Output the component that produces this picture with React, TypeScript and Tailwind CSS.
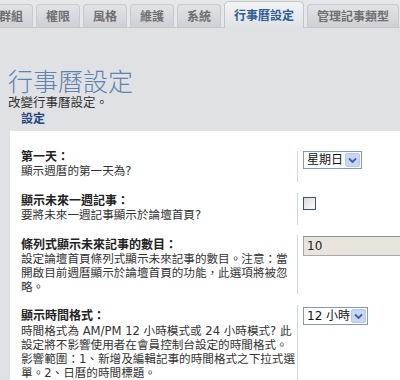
import React from 'react';

const tabs = ['群組', '權限', '風格', '維護', '系統', '行事曆設定', '管理記事類型'];
const activeTab = '行事曆設定';

function Chevron() {
  return (
    <svg width="9" height="7" viewBox="0 0 9 7">
      <path d="M1 1.5 L4.5 5 L8 1.5" fill="none" stroke="#4a5f8c" strokeWidth="1.8" />
    </svg>
  );
}

function FakeSelect({ value, width }: { value: string; width: string }) {
  return (
    <div className={`${width} h-[18px] flex items-center justify-between border border-[#7f9db9] bg-white pl-[3px] pr-[1px]`}>
      <span className="whitespace-nowrap text-[12px] leading-[16px] text-[#111]">{value}</span>
      <span className="shrink-0 w-[15px] h-[14px] flex items-center justify-center rounded-[2px] border border-[#b7c9f2] bg-[#c6d5fc]">
        <Chevron />
      </span>
    </div>
  );
}

export default function App() {
  const font = "font-['DejaVu_Sans','Noto_Sans_CJK_TC',sans-serif]";

  return (
    <div className={`w-[400px] h-[380px] overflow-hidden bg-[#dfe1e5] ${font}`}>
      {/* Tabs */}
      <div className="flex items-end gap-[3px] h-[28px] border-b border-[#c5c7cb] bg-[#e6e7ea]">
        {tabs.map((t, i) => {
          const active = t === activeTab;
          return (
            <div
              key={t}
              className={
                active
                  ? 'shrink-0 h-[27px] -mb-px flex items-center px-[9px] rounded-t-[5px] border border-b-0 border-[#c3c5c9] bg-gradient-to-b from-[#f3f4f6] to-[#dfe1e5] text-[12px] font-bold text-[#2d5d95] font-[\'Noto_Sans_CJK_TC\',sans-serif]'
                  : `shrink-0 h-[23px] flex items-center px-[9px] rounded-t-[4px] border border-b-0 border-[#c7c9cc] bg-gradient-to-b from-[#e2e3e6] to-[#cfd0d4] text-[12px] font-bold text-[#6e6f72] font-['Noto_Sans_CJK_TC',sans-serif] ${i === 0 ? '-ml-[11px]' : ''}`
              }
            >
              {t}
            </div>
          );
        })}
      </div>

      {/* Page header */}
      <div className="pl-[8px] pt-[38px]">
        <h1 className="text-[25px] leading-[28px] font-light text-[#6283ad] font-['Noto_Sans_CJK_TC',sans-serif]">行事曆設定</h1>
        <p className="mt-[2px] text-[12.5px] leading-[14px] text-[#333]">改變行事曆設定。</p>
        <h2 className="mt-[2px] pl-[13px] text-[12px] leading-[14px] font-bold text-[#23467b]">設定</h2>
      </div>

      {/* Settings panel */}
      <div className="mt-[5px] ml-[10px] bg-white pt-[20px] pb-4 text-[#333]">
        {/* 第一天 */}
        <div className="flex">
          <div className="w-[287px] shrink-0 pl-[11px] pb-[4px]">
            <div className="text-[12px] leading-[13px] font-bold text-[#222]">第一天：</div>
            <div className="text-[11.6px] leading-[14px]">顯示週曆的第一天為?</div>
          </div>
          <div className="flex-1 border-l border-[#d6d6d6] pl-[5px] pt-0">
            <FakeSelect value="星期日" width="w-[59px]" />
          </div>
        </div>

        {/* 未來一週記事 */}
        <div className="flex mt-[11px]">
          <div className="w-[287px] shrink-0 pl-[11px] pt-[2px] pb-[3px]">
            <div className="text-[12px] leading-[13px] font-bold text-[#222]">顯示未來一週記事：</div>
            <div className="text-[11.6px] leading-[14px]">要將未來一週記事顯示於論壇首頁?</div>
          </div>
          <div className="flex-1 border-l border-[#d6d6d6] pl-[5px] pt-[4px]">
            <div className="w-[13px] h-[13px] border border-[#2b5a86] bg-gradient-to-br from-[#dcdcd6] to-[#fbfbfa]" />
          </div>
        </div>

        {/* 條列式數目 */}
        <div className="flex mt-[10px]">
          <div className="w-[287px] shrink-0 pl-[11px] pt-[4px] whitespace-nowrap">
            <div className="text-[12px] leading-[13px] font-bold text-[#222]">條列式顯示未來記事的數目：</div>
            <div className="text-[11.6px] leading-[14px]">
              設定論壇首頁條列式顯示未來記事的數目。注意：當
              <br />
              開啟目前週曆顯示於論壇首頁的功能，此選項將被忽
              <br />
              略。
            </div>
          </div>
          <div className="flex-1 border-l border-[#d6d6d6] pl-[5px] pt-[1px]">
            <div className="h-[20px] w-[100px] flex items-center border border-[#a9a9a9] border-t-[#8f8f8f] bg-[#e8e5df] pl-[3px] text-[12px] text-[#222]">
              10
            </div>
          </div>
        </div>

        {/* 時間格式 */}
        <div className="flex mt-[11px]">
          <div className="w-[287px] shrink-0 pl-[11px] pt-[4px] whitespace-nowrap">
            <div className="text-[12px] leading-[14px] font-bold text-[#222]">顯示時間格式：</div>
            <div className="text-[11.6px] leading-[14px] mt-[1px]">
              時間格式為 AM/PM 12 小時模式或 24 小時模式? 此
              <br />
              設定將不影響使用者在會員控制台設定的時間格式。
              <br />
              影響範圍：1、新增及編輯記事的時間格式之下拉式選
              <br />
              單。2、日曆的時間標題。
            </div>
          </div>
          <div className="flex-1 border-l border-[#d6d6d6] pl-[5px] pt-[2px]">
            <FakeSelect value="12 小時" width="w-[65px]" />
          </div>
        </div>
      </div>
    </div>
  );
}
